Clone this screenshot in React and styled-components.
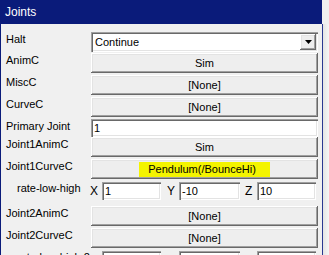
import React from "react";
import styled, { createGlobalStyle } from "styled-components";

const GlobalStyle = createGlobalStyle`
  html, body {
    margin: 0;
    padding: 0;
    overflow: hidden;
    background: #f0f0f0;
  }
  body {
    font-family: "Liberation Sans", Arial, sans-serif;
    font-size: 11px;
    color: #000;
  }
`;

const Screen = styled.div`
  display: flex;
  width: 329px;
  height: 255px;
  overflow: hidden;
`;

const Window = styled.div`
  width: 322px;
  box-sizing: border-box;
  border-left: 1px solid #0a1b7a;
  display: flex;
  flex-direction: column;
  background: #f0f0f0;
  flex-shrink: 0;
`;

const TitleBar = styled.div`
  height: 24px;
  flex-shrink: 0;
  background: #0a1b7a;
  color: #fff;
  font-size: 12px;
  line-height: 24px;
  padding-left: 4px;
`;

const Side = styled.div`
  flex: 1;
  display: flex;
  flex-direction: column;
`;

const SideTop = styled.div`
  height: 24px;
  background: #f0f0f0;
`;

const SideRest = styled.div`
  flex: 1;
  border-left: 1px solid #2a3890;
  background: linear-gradient(to right, #e4e4e4, #f6f6f6);
`;

const Body = styled.div`
  padding: 8px 4px 0 5px;
`;

const Row = styled.div`
  display: grid;
  grid-template-columns: 85px 227px;
  height: ${(p) => p.$h}px;
  flex-shrink: 0;
`;

const Label = styled.div`
  padding-top: 1px;
  padding-left: ${(p) => (p.$indent ? 11 : 0)}px;
  line-height: 13px;
  white-space: nowrap;
`;

const raised = `
  box-shadow: inset -1px -1px #696969, inset 1px 1px #ffffff,
    inset -2px -2px #a0a0a0, inset 2px 2px #e3e3e3;
`;

const sunken = `
  box-shadow: inset 1px 1px #a0a0a0, inset 2px 2px #696969,
    inset -1px -1px #ffffff, inset -2px -2px #e3e3e3;
`;

const Button = styled.button`
  width: 100%;
  height: 20px;
  box-sizing: border-box;
  border: none;
  padding: 0;
  margin: 0;
  background: #eeeeee;
  ${raised}
  font: inherit;
  color: #000;
  display: flex;
  align-items: center;
  justify-content: center;
`;

const Highlight = styled.span`
  background: #f4f400;
  line-height: 15px;
  padding: 0 14px 0 9px;
`;

const Combo = styled.div`
  height: 20px;
  box-sizing: border-box;
  background: #fff;
  ${sunken}
  display: flex;
  align-items: center;
  padding: 2px 2px 2px 4px;
`;

const ComboText = styled.span`
  flex: 1;
  line-height: 16px;
`;

const DropButton = styled.div`
  width: 16px;
  height: 16px;
  box-sizing: border-box;
  background: #eeeeee;
  ${raised}
  display: flex;
  align-items: center;
  justify-content: center;
`;

const TextBox = styled.input`
  width: 100%;
  height: 18px;
  margin: ${(p) => p.$mt || 0}px 0 0;
  box-sizing: border-box;
  border: none;
  outline: none;
  background: #fff;
  ${sunken}
  padding: 0 3px;
  font: inherit;
  color: #000;
`;

const Axes = styled.div`
  display: flex;
  margin-left: -1px;
`;

const Axis = styled.div`
  display: flex;
  width: ${(p) => p.$w}px;
  flex-shrink: 0;
`;

const AxisName = styled.span`
  width: 12px;
  flex-shrink: 0;
  font-size: 12px;
  line-height: 18px;
  margin-top: ${(p) => p.$mt || 0}px;
`;

const AxisField = styled.div`
  width: ${(p) => p.$w}px;
`;

const rows = [
  { kind: "combo", label: "Halt", value: "Continue", h: 21 },
  { kind: "button", label: "AnimC", value: "Sim", h: 22 },
  { kind: "button", label: "MiscC", value: "[None]", h: 22 },
  { kind: "button", label: "CurveC", value: "[None]", h: 22 },
  { kind: "text", label: "Primary Joint", value: "1", h: 18 },
  { kind: "button", label: "Joint1AnimC", value: "Sim", h: 22 },
  { kind: "button", label: "Joint1CurveC", value: "Pendulum(/BounceHi)", h: 22, marked: true },
  { kind: "rate", label: "rate-low-high", values: ["1", "-10", "10"], h: 25 },
  { kind: "button", label: "Joint2AnimC", value: "[None]", h: 22 },
  { kind: "button", label: "Joint2CurveC", value: "[None]", h: 22 },
  { kind: "rate", label: "rate-low-high 2", values: ["", "", ""], h: 25 },
];

const axes = [
  { name: "X", w: 77, field: 59 },
  { name: "Y", w: 78, field: 61 },
  { name: "Z", w: 71, field: 59 },
];

function Control({ row }) {
  if (row.kind === "combo") {
    return (
      <Combo>
        <ComboText>{row.value}</ComboText>
        <DropButton>
          <svg width="7" height="4" viewBox="0 0 7 4">
            <path d="M0 0h7L3.5 4z" fill="#000" />
          </svg>
        </DropButton>
      </Combo>
    );
  }
  if (row.kind === "text") {
    return <TextBox readOnly value={row.value} />;
  }
  if (row.kind === "rate") {
    return (
      <Axes>
        {axes.map((a, i) => (
          <Axis key={a.name} $w={a.w}>
            <AxisName $mt={1}>{a.name}</AxisName>
            <AxisField $w={a.field}>
              <TextBox readOnly value={row.values[i]} $mt={1} />
            </AxisField>
          </Axis>
        ))}
      </Axes>
    );
  }
  return (
    <Button>
      {row.marked ? <Highlight>{row.value}</Highlight> : row.value}
    </Button>
  );
}

export default function App() {
  return (
    <>
      <GlobalStyle />
      <Screen>
        <Window>
          <TitleBar>Joints</TitleBar>
          <Body>
            {rows.map((row) => (
              <Row key={row.label} $h={row.h}>
                <Label $indent={row.kind === "rate"}>{row.label}</Label>
                <Control row={row} />
              </Row>
            ))}
          </Body>
        </Window>
        <Side>
          <SideTop />
          <SideRest />
        </Side>
      </Screen>
    </>
  );
}
